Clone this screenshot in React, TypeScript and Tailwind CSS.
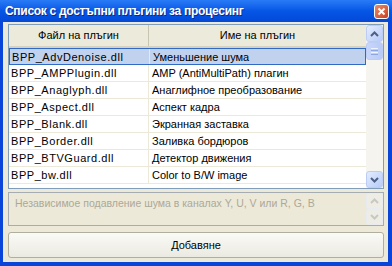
import React from "react";

const plugins = [
  ["BPP_AdvDenoise.dll", "Уменьшение шума"],
  ["BPP_AMPPlugin.dll", "AMP (AntiMultiPath) плагин"],
  ["BPP_Anaglyph.dll", "Анаглифное преобразование"],
  ["BPP_Aspect.dll", "Аспект кадра"],
  ["BPP_Blank.dll", "Экранная заставка"],
  ["BPP_Border.dll", "Заливка бордюров"],
  ["BPP_BTVGuard.dll", "Детектор движения"],
  ["BPP_bw.dll", "Color to B/W image"],
];

function Arrow({ up, color }: { up: boolean; color: string }) {
  return (
    <svg width="9" height="6" viewBox="0 0 9 6">
      <path
        d={up ? "M1 5 L4.5 1.5 L8 5" : "M1 1 L4.5 4.5 L8 1"}
        fill="none"
        stroke={color}
        strokeWidth="2"
      />
    </svg>
  );
}

function ScrollBtn({ up, disabled }: { up: boolean; disabled?: boolean }) {
  return (
    <div
      className={
        disabled
          ? "w-[17px] h-[17px] flex items-center justify-center rounded-[2px] border border-[#E8EBEF] bg-[#EEEDE5]"
          : "w-[17px] h-[17px] flex items-center justify-center rounded-[3px] border border-[#BBCCF5] bg-gradient-to-br from-[#E4EDFF] to-[#B6CBF7]"
      }
    >
      <Arrow up={up} color={disabled ? "#C9C8C0" : "#4D6185"} />
    </div>
  );
}

export default function App() {
  return (
    <div className="w-[392px] h-[266px] bg-[#0845D8] flex flex-col [font-family:'Liberation_Sans',Arial,sans-serif] text-[11px] text-black">
      {/* title bar */}
      <div className="h-[22px] flex items-center justify-between pl-[5px] pr-[3px] bg-gradient-to-b from-[#2A7BF6] via-[#0656E6] to-[#0448D6]">
        <span className="text-white font-bold text-[12px] tracking-[-0.3px] [text-shadow:1px_1px_0_#0A2A8A]">
          Список с достъпни плъгини за процесинг
        </span>
        <div className="w-[15px] h-[15px] rounded-[3px] border border-white bg-gradient-to-br from-[#E88B6A] to-[#C93D17] flex items-center justify-center">
          <svg width="9" height="9" viewBox="0 0 9 9">
            <path d="M1.5 1.5 L7.5 7.5 M7.5 1.5 L1.5 7.5" stroke="white" strokeWidth="2" />
          </svg>
        </div>
      </div>

      {/* body */}
      <div className="flex-1 ml-[3px] mr-[4px] mb-[4px] bg-[#ECE9D8] pl-[5px] pr-[4px] pt-[2px] flex flex-col">
        {/* list */}
        <div className="h-[165px] border border-[#7F9DB9] bg-white flex">
          <div className="flex-1 flex flex-col">
            <div className="h-[23px] flex bg-[#EBEADB] border-b-2 border-[#D6D2C2]">
              <div className="w-[140px] flex items-center justify-center border-r border-[#C7C5B2]">
                Файл на плъгин
              </div>
              <div className="flex-1 flex items-center justify-center">Име на плъгин</div>
            </div>
            {plugins.map(([file, name], i) => (
              <div
                key={file}
                className={
                  i === 0
                    ? "h-[17px] flex bg-[#C1D2EE] border border-[#316AC5]"
                    : "h-[17px] flex border-b border-[#ECE9D8]"
                }
              >
                <div className="w-[140px] pl-[2px] leading-[16px] tracking-[0.55px] border-r border-[#ECE9D8]">
                  {file}
                </div>
                <div className="flex-1 pl-[3px] leading-[16px]">{name}</div>
              </div>
            ))}
          </div>
          {/* scrollbar */}
          <div className="w-[17px] bg-[#F5F4EE] flex flex-col justify-between">
            <div className="flex flex-col">
              <ScrollBtn up />
              <div className="w-[17px] h-[18px] rounded-[3px] border border-[#BBCCF5] bg-gradient-to-r from-[#C8D6FB] to-[#B8CAF6] flex flex-col items-center justify-center gap-[1px]">
                <div className="w-[7px] h-[1px] bg-[#EEF4FE]" />
                <div className="w-[7px] h-[1px] bg-[#8CA6E0]" />
                <div className="w-[7px] h-[1px] bg-[#EEF4FE]" />
                <div className="w-[7px] h-[1px] bg-[#8CA6E0]" />
              </div>
            </div>
            <ScrollBtn up={false} />
          </div>
        </div>

        {/* description */}
        <div className="mt-[3px] h-[34px] border border-[#A5ACB2] bg-[#ECE9D8] flex">
          <div className="flex-1 pl-[6px] pt-[3px] text-[10.5px] text-[#ACA899]">
            Независимое подавление шума в каналах Y, U, V или R, G, B
          </div>
          <div className="w-[17px] flex flex-col">
            <ScrollBtn up disabled />
            <ScrollBtn up={false} disabled />
          </div>
        </div>

        {/* button */}
        <button className="mt-[6px] h-[26px] rounded-[3px] border border-[#B0AE9F] bg-gradient-to-b from-[#FAFAF6] to-[#EBEAE2] flex items-center justify-center text-[11px]">
          Добавяне
        </button>
      </div>
    </div>
  );
}
